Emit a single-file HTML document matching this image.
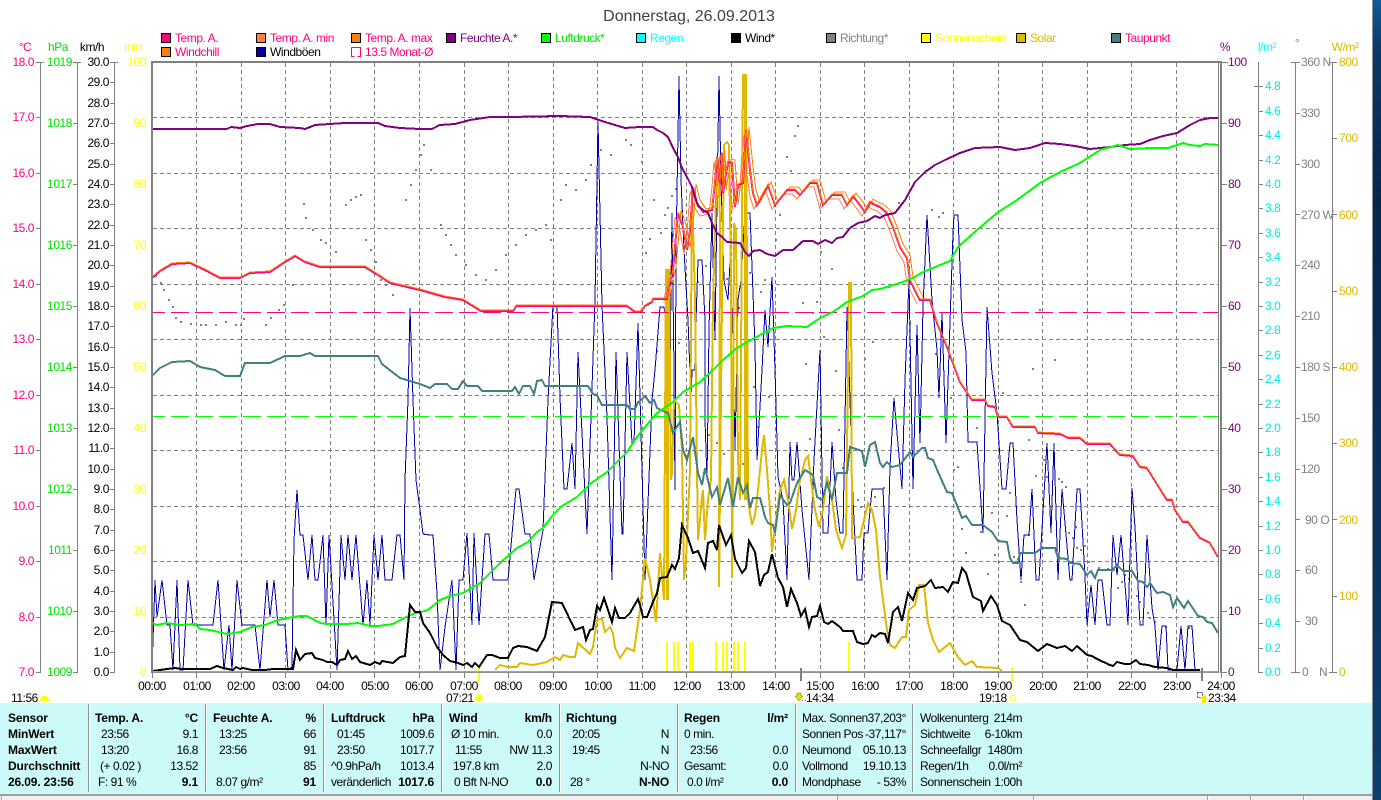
<!DOCTYPE html>
<html lang="de">
<head>
<meta charset="utf-8">
<title>Donnerstag, 26.09.2013</title>
<style>
html,body{margin:0;padding:0;background:#fff;width:1381px;height:800px;overflow:hidden}
svg{position:absolute;left:0;top:0;display:block}
text{font-family:"Liberation Sans",sans-serif;font-size:12px;letter-spacing:-.45px}
.l{fill:none;stroke-linejoin:miter;shape-rendering:crispEdges}
.e{text-anchor:end}
.m{text-anchor:middle}
.b{font-weight:bold;font-size:12px;letter-spacing:-.15px}
</style>
</head>
<body>
<svg width="1381" height="800" viewBox="0 0 1381 800" xmlns="http://www.w3.org/2000/svg">
<defs>
<linearGradient id="desk" x1="0" y1="0" x2="0" y2="1">
<stop offset="0" stop-color="#0f5c9c"/><stop offset=".06" stop-color="#0b3a68"/><stop offset=".25" stop-color="#06274c"/><stop offset=".7" stop-color="#0a3460"/><stop offset="1" stop-color="#0d3f70"/>
</linearGradient>
<polyline id="tp" points="152,278 160,271 172,264 190,263 205,270 220,278 240,278 250,273 270,272 285,262 295,256 305,262 320,267 365,267 378,275 390,283 420,290 445,297 463,300 481,311 513,311 516,306 627,306 635,312 640,312 645,306 652,302 653,299 667,299 668,290 673,270 678,213 683,227 687,250 690,230 693,187 697,203 703,212 712,210 715,183 717,157 720,183 722,153 723,193 728,162 732,163 735,207 738,185 743,183 746,130 750,170 753,193 757,205 768,185 775,205 787,190 795,190 800,195 810,183 817,183 823,205 832,195 842,195 847,205 853,196 860,205 865,212 870,202 875,205 880,207 887,213 893,227 900,247 907,258 910,280 920,300 930,300 937,323 947,347 960,382 972,400 985,400 988,406 995,407 998,417 1007,417 1013,427 1035,427 1038,433 1060,434 1068,438 1080,438 1087,444 1110,444 1120,455 1133,456 1140,467 1147,468 1167,500 1172,500 1175,510 1183,522 1188,522 1200,538 1210,543 1218,557"/>
<polyline id="tpm" points="667,299 668,290 673,270 678,213 683,227 687,250 690,230 693,187 697,203 703,212 712,210 715,183 717,157 720,183 722,153 723,193 728,162 732,163 735,207 738,185 743,183 746,130 750,170 753,193 757,205 768,185 775,205 787,190 795,190 800,195 810,183 817,183 823,205 832,195 842,195 847,205 853,196 860,205 865,212 870,202 875,205 880,207 887,213 893,227 900,247 907,258 910,280 920,300"/>
</defs>

<rect x="1373" y="0" width="8" height="800" fill="url(#desk)"/>
<rect x="1372" y="0" width="1" height="800" fill="#8a8f96"/>

<text x="689" y="21" class="m" style="font-size:16px;letter-spacing:0" fill="#404040">Donnerstag, 26.09.2013</text>

<!-- Legend -->
<g stroke="#000" stroke-width="1" shape-rendering="crispEdges">
<rect x="161.5" y="33.5" width="9" height="9" fill="#ff0080"/>
<rect x="256.5" y="33.5" width="9" height="9" fill="#ff8040"/>
<rect x="351.5" y="33.5" width="9" height="9" fill="#ff8000"/>
<rect x="446.5" y="33.5" width="9" height="9" fill="#800080"/>
<rect x="541.5" y="33.5" width="9" height="9" fill="#00ff00"/>
<rect x="636.5" y="33.5" width="9" height="9" fill="#00ffff"/>
<rect x="731.5" y="33.5" width="9" height="9" fill="#000"/>
<rect x="826.5" y="33.5" width="9" height="9" fill="#808080"/>
<rect x="921.5" y="33.5" width="9" height="9" fill="#ffff00"/>
<rect x="1016.5" y="33.5" width="9" height="9" fill="#e0b800"/>
<rect x="1111.5" y="33.5" width="9" height="9" fill="#408080"/>
<rect x="161.5" y="47.5" width="9" height="9" fill="#ff8000"/>
<rect x="256.5" y="47.5" width="9" height="9" fill="#0000a0"/>
</g>
<path d="M351.5 47.5h9v9h-3M351.5 47.5v9h3" class="l" stroke="#ff0080"/>
<g>
<text x="175" y="42" fill="#ff0080">Temp. A.</text>
<text x="270" y="42" fill="#ff0080">Temp. A. min</text>
<text x="365" y="42" fill="#ff0080">Temp. A. max</text>
<text x="460" y="42" fill="#800080">Feuchte A.*</text>
<text x="555" y="42" fill="#00e000">Luftdruck*</text>
<text x="650" y="42" fill="#00ffff">Regen</text>
<text x="745" y="42" fill="#000">Wind*</text>
<text x="840" y="42" fill="#808080">Richtung*</text>
<text x="935" y="42" fill="#ffff00">Sonnenschein</text>
<text x="1030" y="42" fill="#e0b800">Solar</text>
<text x="1125" y="42" fill="#ff0080">Taupunkt</text>
<text x="175" y="56" fill="#ff0080">Windchill</text>
<text x="270" y="56" fill="#000">Windböen</text>
<text x="365" y="56" fill="#ff0080">13.5 Monat-Ø</text>
</g>

<!-- Axis headers -->
<text x="25" y="51" class="m" fill="#ff0080">°C</text>
<text x="58" y="51" class="m" fill="#00e000">hPa</text>
<text x="92" y="51" class="m" fill="#000">km/h</text>
<text x="133" y="51" class="m" fill="#ffff00">min</text>
<text x="1225" y="51" class="m" fill="#800080">%</text>
<text x="1267" y="51" class="m" fill="#00ffff">l/m²</text>
<text x="1297" y="47" class="m" fill="#808080">°</text>
<text x="1345" y="51" class="m" fill="#e0b800">W/m²</text>

<!-- Left scale axes -->
<path class="l" stroke="#808080" d="M40.5 62V672M77.5 62V672M114.5 62V672M1258.5 62V672M1295.5 62V672M1332.5 62V672
M36 62.5h8M36 117.5h5M36 173.5h5M36 228.5h5M36 284.5h5M36 339.5h5M36 395.5h5M36 450.5h5M36 506.5h5M36 561.5h5M36 617.5h5M36 672.5h5
M73 62.5h8M73 123.5h5M73 184.5h5M73 245.5h5M73 306.5h5M73 367.5h5M73 428.5h5M73 489.5h5M73 550.5h5M73 611.5h5M73 672.5h5
M110 62.5h8M110 82.5h5M110 103.5h5M110 123.5h5M110 143.5h5M110 164.5h5M110 184.5h5M110 204.5h5M110 225.5h5M110 245.5h5M110 265.5h5M110 286.5h5M110 306.5h5M110 326.5h5M110 347.5h5M110 367.5h5M110 387.5h5M110 408.5h5M110 428.5h5M110 448.5h5M110 469.5h5M110 489.5h5M110 509.5h5M110 530.5h5M110 550.5h5M110 570.5h5M110 591.5h5M110 611.5h5M110 631.5h5M110 652.5h5M110 672.5h5
M1222 62.5h6M1222 123.5h5M1222 184.5h5M1222 245.5h5M1222 306.5h5M1222 367.5h5M1222 428.5h5M1222 489.5h5M1222 550.5h5M1222 611.5h5M1222 672.5h5
M1254 86.5h9M1258 111.5h5M1258 135.5h5M1258 160.5h5M1258 184.5h5M1258 208.5h5M1258 233.5h5M1258 257.5h5M1258 282.5h5M1258 306.5h5M1258 330.5h5M1258 355.5h5M1258 379.5h5M1258 404.5h5M1258 428.5h5M1258 452.5h5M1258 477.5h5M1258 501.5h5M1258 526.5h5M1258 550.5h5M1258 574.5h5M1258 599.5h5M1258 623.5h5M1258 648.5h5M1258 672.5h5
M1291 62.5h9M1295 113.5h5M1295 164.5h5M1295 214.5h5M1295 265.5h5M1295 316.5h5M1295 367.5h5M1295 418.5h5M1295 469.5h5M1295 519.5h5M1295 570.5h5M1295 621.5h5M1291 672.5h9
M1329 62.5h8M1332 138.5h5M1332 214.5h5M1332 291.5h5M1332 367.5h5M1332 443.5h5M1332 519.5h5M1332 596.5h5M1329 672.5h8"/>

<g fill="#ff0080">
<text x="34" y="66" class="e">18.0</text><text x="34" y="121" class="e">17.0</text><text x="34" y="177" class="e">16.0</text><text x="34" y="232" class="e">15.0</text><text x="34" y="288" class="e">14.0</text><text x="34" y="343" class="e">13.0</text><text x="34" y="399" class="e">12.0</text><text x="34" y="454" class="e">11.0</text><text x="34" y="510" class="e">10.0</text><text x="34" y="565" class="e">9.0</text><text x="34" y="621" class="e">8.0</text><text x="34" y="676" class="e">7.0</text>
</g>
<g fill="#00e000">
<text x="72" y="66" class="e">1019</text><text x="72" y="127" class="e">1018</text><text x="72" y="188" class="e">1017</text><text x="72" y="249" class="e">1016</text><text x="72" y="310" class="e">1015</text><text x="72" y="371" class="e">1014</text><text x="72" y="432" class="e">1013</text><text x="72" y="493" class="e">1012</text><text x="72" y="554" class="e">1011</text><text x="72" y="615" class="e">1010</text><text x="72" y="676" class="e">1009</text>
</g>
<g fill="#000">
<text x="109" y="66" class="e">30.0</text><text x="109" y="86" class="e">29.0</text><text x="109" y="107" class="e">28.0</text><text x="109" y="127" class="e">27.0</text><text x="109" y="147" class="e">26.0</text><text x="109" y="168" class="e">25.0</text><text x="109" y="188" class="e">24.0</text><text x="109" y="208" class="e">23.0</text><text x="109" y="229" class="e">22.0</text><text x="109" y="249" class="e">21.0</text><text x="109" y="269" class="e">20.0</text><text x="109" y="290" class="e">19.0</text><text x="109" y="310" class="e">18.0</text><text x="109" y="330" class="e">17.0</text><text x="109" y="351" class="e">16.0</text><text x="109" y="371" class="e">15.0</text><text x="109" y="391" class="e">14.0</text><text x="109" y="412" class="e">13.0</text><text x="109" y="432" class="e">12.0</text><text x="109" y="452" class="e">11.0</text><text x="109" y="473" class="e">10.0</text><text x="109" y="493" class="e">9.0</text><text x="109" y="513" class="e">8.0</text><text x="109" y="534" class="e">7.0</text><text x="109" y="554" class="e">6.0</text><text x="109" y="574" class="e">5.0</text><text x="109" y="595" class="e">4.0</text><text x="109" y="615" class="e">3.0</text><text x="109" y="635" class="e">2.0</text><text x="109" y="656" class="e">1.0</text><text x="109" y="676" class="e">0.0</text>
</g>
<g fill="#ffff00">
<text x="146" y="66" class="e">100</text><text x="146" y="127" class="e">90</text><text x="146" y="188" class="e">80</text><text x="146" y="249" class="e">70</text><text x="146" y="310" class="e">60</text><text x="146" y="371" class="e">50</text><text x="146" y="432" class="e">40</text><text x="146" y="493" class="e">30</text><text x="146" y="554" class="e">20</text><text x="146" y="615" class="e">10</text><text x="146" y="676" class="e">0</text>
</g>

<!-- Right scales -->
<g fill="#800080">
<text x="1228" y="66">100</text><text x="1228" y="127">90</text><text x="1228" y="188">80</text><text x="1228" y="249">70</text><text x="1228" y="310">60</text><text x="1228" y="371">50</text><text x="1228" y="432">40</text><text x="1228" y="493">30</text><text x="1228" y="554">20</text><text x="1228" y="615">10</text><text x="1228" y="676">0</text>
</g>
<g fill="#00e8e8">
<text x="1265" y="90">4.8</text><text x="1265" y="115">4.6</text><text x="1265" y="139">4.4</text><text x="1265" y="164">4.2</text><text x="1265" y="188">4.0</text><text x="1265" y="212">3.8</text><text x="1265" y="237">3.6</text><text x="1265" y="261">3.4</text><text x="1265" y="286">3.2</text><text x="1265" y="310">3.0</text><text x="1265" y="334">2.8</text><text x="1265" y="359">2.6</text><text x="1265" y="383">2.4</text><text x="1265" y="408">2.2</text><text x="1265" y="432">2.0</text><text x="1265" y="456">1.8</text><text x="1265" y="481">1.6</text><text x="1265" y="505">1.4</text><text x="1265" y="530">1.2</text><text x="1265" y="554">1.0</text><text x="1265" y="578">0.8</text><text x="1265" y="603">0.6</text><text x="1265" y="627">0.4</text><text x="1265" y="652">0.2</text><text x="1265" y="676">0.0</text>
</g>
<g fill="#808080">
<text x="1301" y="66">360 N</text><text x="1301" y="117">330</text><text x="1301" y="168">300</text><text x="1301" y="219">270 W</text><text x="1301" y="269">240</text><text x="1301" y="320">210</text><text x="1301" y="371">180 S</text><text x="1301" y="422">150</text><text x="1301" y="473">120</text><text x="1305" y="524">90 O</text><text x="1305" y="574">60</text><text x="1305" y="625">30</text><text x="1302" y="676">0</text><text x="1319" y="676">N</text>
</g>
<g fill="#e0b800">
<text x="1339" y="66">800</text><text x="1339" y="142">700</text><text x="1339" y="219">600</text><text x="1339" y="295">500</text><text x="1339" y="371">400</text><text x="1339" y="447">300</text><text x="1339" y="524">200</text><text x="1339" y="600">100</text><text x="1339" y="676">0</text>
</g>

<!-- Grid -->
<path class="l" stroke="#808080" stroke-dasharray="4 3" d="M153 117.5H1218M153 173.5H1218M153 228.5H1218M153 284.5H1218M153 339.5H1218M153 395.5H1218M153 450.5H1218M153 506.5H1218M153 561.5H1218M153 617.5H1218
M196.5 63V671M241.5 63V671M285.5 63V671M330.5 63V671M374.5 63V671M419.5 63V671M464.5 63V671M508.5 63V671M553.5 63V671M597.5 63V671M642.5 63V671M686.5 63V671M731.5 63V671M775.5 63V671M820.5 63V671M864.5 63V671M909.5 63V671M953.5 63V671M998.5 63V671M1042.5 63V671M1087.5 63V671M1131.5 63V671M1176.5 63V671"/>

<!-- Gray direction dots -->
<path class="l" stroke="#808080" stroke-width="2" d="M155 276h2M160 283h2M163 290h2M168 300h2M172 307h2M175 318h2M180 322h2M190 324h2M200 325h2M205 325h2M215 325h2M225 322h2M235 325h2M240 325h2M243 319h2M265 325h2M270 318h2M278 310h2M283 305h2M292 285h2M303 204h2M305 218h2M312 230h2M320 240h2M325 243h2M335 252h2M345 205h2M350 200h2M355 197h2M360 195h2M365 240h2M370 250h2M375 262h2M380 280h2M385 285h2M392 295h2M405 200h2M410 185h2M415 170h2M420 155h2M423 145h2M430 170h2M440 225h2M445 235h2M450 245h2M455 255h2M465 265h2M475 275h2M485 280h2M495 270h2M505 255h2M515 245h2M525 235h2M535 230h2M545 225h2M550 240h2M560 200h2M565 185h2M575 190h2M585 180h2M590 165h2M600 150h2M610 155h2M625 140h2M630 145h2M641 162h2M645 253h2M649 239h2M653 200h2M656 351h2M660 233h2M664 215h2M667 208h2M671 196h2M675 189h2M678 343h2M690 376h2M693 268h2M697 282h2M705 266h2M708 435h2M712 280h2M716 443h2M719 269h2M723 454h2M726 279h2M731 317h2M733 420h2M738 308h2M742 464h2M745 278h2M749 273h2M753 387h2M757 427h2M760 292h2M764 280h2M768 397h2M775 240h2M779 215h2M783 194h2M786 157h2M790 171h2M794 136h2M797 126h2M802 303h2M805 364h2M809 439h2M812 313h2M816 302h2M820 252h2M823 337h2M831 269h2M835 371h2M838 430h2M842 468h2M857 500h2M860 507h2M864 359h2M872 342h2M874 497h2M883 488h2M888 287h2M898 203h2M909 323h2M923 313h2M931 210h2M935 354h2M938 217h2M942 213h2M950 398h2M953 470h2M957 467h2M961 529h2M965 553h2M976 428h2M980 532h2M987 574h2M991 513h2M994 555h2M998 562h2M1002 393h2M1006 516h2M1009 493h2M1013 557h2M1017 559h2M1020 582h2M1024 605h2M1028 440h2M1028 535h2M1032 369h2M1035 476h2M1039 310h2M1043 460h2M1046 477h2M1050 517h2M1054 360h2M1058 479h2M1061 482h2M1065 487h2M1068 533h2M1072 538h2M1075 527h2M1076 548h2M1080 550h2M1084 546h2M1088 562h2M1098 568h2M1107 569h2M1113 570h2M1117 588h2M1121 582h2M1124 575h2M1128 579h2M1136 596h2M1139 602h2M1147 613h2M1149 618h2M1154 622h2M1165 627h2M1188 628h2"/>

<!-- Wind gusts (blue) -->
<polyline class="l" stroke="#0000a8" points="152,670 155,580 157,617 162,580 167,625 170,625 173,670 177,580 180,670 183,670 188,580 193,625 213,625 218,580 224,670 229,625 232,670 237,580 242,625 255,625 260,670 267,580 270,617 274,580 278,625 285,625 288,670 292,667 294,540 297,490 300,535 303,535 308,580 312,535 315,580 318,580 323,535 326,625 329,535 337,670 341,535 345,580 348,535 352,580 356,535 363,625 367,580 370,625 374,535 378,580 382,535 385,580 392,580 397,535 400,535 404,580 405,480 408,400 410,308 413,400 416,480 420,510 423,534 430,535 433,535 437,593 440,670 445,627 452,580 456,670 459,580 463,580 467,533 472,625 474,533 479,625 485,534 489,534 493,580 508,580 516,489 519,489 525,534 530,534 534,580 543,530 548,400 553,305 557,305 560,397 564,489 567,489 572,443 575,489 578,352 587,534 595,300 598,122 602,305 607,417 612,580 616,352 622,534 623,534 627,352 632,443 634,443 638,323 645,580 652,400 655,370 660,307 664,307 668,340 670,370 672,213 674,370 675,490 676,250 679,76 681,180 684,250 688,320 691,400 692,370 695,370 696,320 698,260 702,260 705,320 705,420 707,480 709,330 712,213 714,300 715,340 717,200 719,76 721,180 724,280 728,300 730,263 733,340 735,450 738,300 741,280 745,213 750,213 755,347 757,460 762,370 765,310 768,347 772,277 775,370 778,477 783,500 787,580 790,442 792,480 794,480 797,442 802,510 806,550 809,580 814,460 820,350 823,533 828,533 832,442 836,500 840,533 843,533 847,307 850,400 853,500 857,580 862,580 864,533 868,533 872,489 883,489 887,580 890,467 894,398 897,433 902,489 905,380 909,280 913,489 917,325 920,443 923,307 927,215 932,300 937,350 939,398 942,313 946,443 953,233 954,215 958,215 962,320 966,352 968,442 977,442 983,533 987,307 992,373 997,413 1002,489 1006,489 1010,443 1013,443 1017,520 1021,580 1024,535 1029,535 1032,489 1036,580 1039,580 1047,443 1051,533 1054,443 1058,580 1062,489 1070,580 1072,580 1077,489 1080,489 1085,577 1087,625 1091,585 1095,625 1098,580 1102,580 1107,625 1110,625 1113,535 1117,575 1121,535 1127,610 1128,625 1132,488 1135,527 1140,625 1143,625 1147,535 1152,608 1155,626 1158,670 1162,626 1166,626 1168,670 1177,670 1181,626 1185,670 1188,626 1192,626 1195,670 1200,670"/>

<!-- Solar (gold) -->
<polyline class="l" stroke="#e0b800" stroke-width="2" points="495,670 500,665 508,667 517,667 520,663 533,665 542,663 547,662 555,657 560,660 563,655 570,657 575,657 578,643 590,654 593,647 597,620 602,619 605,632 610,627 613,633 615,648 620,658 627,648 634,651 640,610 645,558 650,580 656,622 660,553 662,575 664,600 666,270 669,270 671,480 672,473 674,400 679,405 682,450 684,580 686,560 690,470 692,187 695,300 697,470 698,540 700,520 702,497 703,490 705,540 708,500 711,480 713,300 716,200 718,160 720,220 719,587 722,300 724,145 727,142 729,145 731,280 732,578 733,480 734,223 736,230 738,460 740,500 743,75 746,75 748,500 752,525 755,515 758,490 762,450 764,435 767,470 770,510 772,552 776,520 780,490 784,480 788,500 792,529 796,510 800,480 805,460 808,456 811,480 815,510 819,527 823,510 827,476 832,500 836,530 842,548 846,535 849,283 851,283 852,538 860,537 864,520 868,503 872,510 876,530 880,577 887,630 890,645 895,648 902,637 906,637 909,610 915,605 919,585 924,585 928,623 933,640 939,652 950,643 958,657 965,665 972,661 977,667 998,668 1002,671"/>
<path class="l" stroke="#e0b800" stroke-width="3" d="M667.5 270V600M745.5 74V500"/>

<!-- Sunshine bars -->
<path class="l" stroke="#ffff00" stroke-width="2" d="M667 642V671M674 642V671M678 642V671M690 642V671M693 642V671M716 642V671M723 642V671M727 642V671M734 642V671M738 642V671M745 642V671M849 642V671M479 667V681M1012 668V681"/>

<!-- Dew point -->
<polyline class="l" stroke="#408080" stroke-width="2" points="152,376 160,368 172,362 190,361 200,367 215,370 225,376 240,376 245,363 270,363 285,356 300,356 310,353 315,356 378,356 382,364 400,378 420,384 430,388 435,384 447,384 452,389 458,389 463,381 467,386 478,386 482,391 512,391 515,387 519,394 523,386 530,386 534,394 537,381 542,380 545,386 588,386 593,394 597,395 602,405 627,405 630,409 635,409 638,402 640,401 645,396 650,403 654,400 657,408 665,412 668,413 673,433 680,422 683,450 687,460 693,437 698,473 702,485 705,468 712,497 717,487 720,505 728,478 733,507 738,477 743,493 747,485 750,508 753,498 760,498 765,517 768,523 773,525 775,533 780,495 787,505 790,503 797,483 805,470 813,475 817,497 822,500 827,483 832,500 837,473 847,473 850,447 862,451 865,467 870,445 875,442 880,463 883,467 887,462 892,467 900,465 910,452 913,457 922,448 925,448 928,458 933,460 938,472 947,492 952,493 962,518 966,516 972,525 983,525 992,532 998,541 1007,542 1010,558 1013,563 1018,563 1020,553 1035,553 1042,548 1055,548 1058,558 1067,559 1070,563 1080,564 1087,575 1091,571 1095,578 1098,570 1112,570 1117,565 1123,571 1132,571 1138,581 1143,582 1147,587 1150,583 1157,593 1163,592 1170,595 1173,607 1177,598 1184,608 1188,601 1198,616 1203,617 1207,622 1212,623 1218,633"/>

<!-- Monthly averages -->
<line x1="153" x2="1218" y1="312.5" y2="312.5" class="l" stroke="#ff0080" stroke-dasharray="18 6" stroke-dashoffset="6"/>
<line x1="153" x2="1218" y1="416.5" y2="416.5" class="l" stroke="#00ff00" stroke-dasharray="18 6" stroke-dashoffset="6"/>

<!-- Temperature -->
<use href="#tpm" class="l" stroke="#ff8040" transform="translate(-3 4)"/>
<use href="#tpm" class="l" stroke="#ff8000" transform="translate(3 -3)"/>
<use href="#tp" class="l" stroke="#ff0080" stroke-width="2"/>
<use href="#tp" class="l" stroke="#ff8000" transform="translate(0 -1)"/>

<!-- Humidity -->
<polyline class="l" stroke="#800080" stroke-width="2" points="152,129 227,129 231,127 240,128 247,126 258,124 270,124 280,127 300,128 305,129 315,125 330,124 345,123 378,123 385,126 400,128 420,129 432,129 440,125 455,124 470,120 490,117 510,117 560,116 590,117 605,122 625,128 640,127 653,127 657,130 663,133 668,137 673,148 678,157 682,168 687,177 692,187 695,197 698,206 703,210 708,213 712,223 717,233 722,237 727,242 740,243 745,252 749,256 753,251 760,250 767,254 775,256 783,250 793,250 803,241 813,241 818,244 825,240 832,243 837,238 843,237 850,228 858,223 867,221 875,216 880,218 885,215 895,213 905,200 915,182 925,172 935,165 945,160 960,153 975,148 1000,147 1015,150 1030,148 1045,143 1060,144 1075,146 1090,149 1110,147 1125,145 1140,144 1150,140 1163,136 1177,133 1190,125 1200,120 1210,118 1219,118"/>

<!-- Pressure -->
<polyline class="l" stroke="#00ff00" stroke-width="2" points="152,623 157,625 167,623 180,625 195,624 200,629 210,630 227,634 240,632 252,627 265,625 278,620 293,617 300,616 307,616 320,623 327,624 347,624 358,623 370,626 378,626 393,624 410,615 428,610 440,600 450,596 463,593 480,583 500,563 517,548 528,542 537,532 543,528 553,515 562,506 577,497 590,484 607,472 627,452 640,433 657,413 673,402 683,392 700,382 713,370 723,360 737,348 747,342 760,335 773,328 787,326 807,327 820,318 833,312 847,302 863,296 872,290 880,289 900,283 913,278 923,272 933,268 940,265 950,261 958,247 977,230 997,213 1017,200 1040,183 1060,172 1080,163 1100,150 1118,145 1130,149 1150,148 1168,148 1183,143 1190,145 1200,146 1205,144 1219,145"/>

<!-- Wind (black) -->
<polyline class="l" stroke="#000" stroke-width="2" points="152,671 160,670 167,669 175,668 182,669 195,669 210,669 217,666 223,668 233,670 236,667 240,669 243,668 252,670 265,670 273,669 288,669 293,669 296,650 300,660 305,654 312,653 315,658 323,660 327,662 332,662 337,665 340,660 345,659 348,651 352,659 356,656 360,662 370,665 375,662 380,664 382,661 393,663 400,657 405,656 410,605 415,612 420,612 423,623 430,633 437,647 443,655 450,661 458,663 463,665 467,663 472,667 475,663 479,667 487,655 492,655 500,658 508,658 513,648 518,646 527,647 537,651 545,637 552,602 562,603 575,630 583,627 586,640 590,630 593,629 597,606 600,610 604,598 612,622 615,608 619,618 625,618 630,613 638,599 640,605 643,617 647,617 653,602 657,593 660,578 667,577 672,565 675,569 679,558 682,525 688,538 693,553 698,551 705,568 708,543 713,541 717,550 719,525 726,545 731,535 735,559 742,573 746,568 749,541 755,552 760,586 764,575 768,572 772,554 778,578 783,587 787,607 791,589 797,603 801,616 805,609 809,627 812,617 817,616 820,606 824,622 828,624 832,621 840,627 843,631 853,631 857,642 863,644 868,643 872,635 875,637 880,633 885,634 888,643 893,612 898,607 902,621 908,593 913,600 917,588 925,586 931,580 935,588 943,587 948,592 953,582 958,583 962,568 966,573 973,597 981,601 983,611 991,596 997,605 1002,621 1010,625 1020,640 1027,642 1038,651 1047,644 1057,648 1065,646 1072,651 1077,646 1087,655 1092,656 1097,659 1110,665 1113,666 1117,662 1125,664 1130,664 1136,660 1140,664 1148,665 1155,667 1167,668 1173,670 1200,670"/>

<!-- Frame -->
<rect x="153" y="671" width="1066" height="1" fill="#20d8e0"/>
<rect x="153" y="672" width="1066" height="1" fill="#909090"/>
<rect x="151" y="61" width="1070" height="2" fill="#808080"/>
<rect x="151" y="61" width="2" height="612" fill="#808080"/>
<rect x="1218" y="61" width="1" height="612" fill="#808080"/>
<rect x="1220" y="61" width="2" height="612" fill="#808080"/>
<path class="l" stroke="#808080" d="M152.5 673V678M196.5 673V678M241.5 673V678M285.5 673V678M330.5 673V678M374.5 673V678M419.5 673V678M464.5 673V678M508.5 673V678M553.5 673V678M597.5 673V678M642.5 673V678M686.5 673V678M731.5 673V678M775.5 673V678M820.5 673V678M864.5 673V678M909.5 673V678M953.5 673V678M998.5 673V678M1042.5 673V678M1087.5 673V678M1131.5 673V678M1176.5 673V678M1221.5 673V678"/>
<path class="l" stroke="#808080" stroke-width="2" d="M801 668V681M1202 668V681"/>

<!-- Hours -->
<g fill="#000">
<text x="152" y="690" class="m">00:00</text><text x="197" y="690" class="m">01:00</text><text x="241" y="690" class="m">02:00</text><text x="286" y="690" class="m">03:00</text><text x="330" y="690" class="m">04:00</text><text x="375" y="690" class="m">05:00</text><text x="419" y="690" class="m">06:00</text><text x="464" y="690" class="m">07:00</text><text x="508" y="690" class="m">08:00</text><text x="553" y="690" class="m">09:00</text><text x="598" y="690" class="m">10:00</text><text x="642" y="690" class="m">11:00</text><text x="687" y="690" class="m">12:00</text><text x="731" y="690" class="m">13:00</text><text x="776" y="690" class="m">14:00</text><text x="820" y="690" class="m">15:00</text><text x="865" y="690" class="m">16:00</text><text x="909" y="690" class="m">17:00</text><text x="954" y="690" class="m">18:00</text><text x="998" y="690" class="m">19:00</text><text x="1043" y="690" class="m">20:00</text><text x="1087" y="690" class="m">21:00</text><text x="1132" y="690" class="m">22:00</text><text x="1177" y="690" class="m">23:00</text><text x="1221" y="690" class="m">24:00</text>
<text x="11" y="702">11:56</text>
<text x="446" y="702">07:21</text>
<text x="806" y="702">14:34</text>
<text x="979" y="702">19:18</text>
<text x="1208" y="702">23:34</text>
</g>

<!-- Small icons -->
<path d="M40 701a4.5 5.5 0 0 1 9 0z" fill="#ffff00"/>
<circle cx="479" cy="698" r="4.5" fill="#fff28a"/><circle cx="479" cy="698" r="3" fill="#ffff00"/>
<path d="M797 693h4v3h2l-4 5-4-5h2z" fill="#e8e000" stroke="#707000" stroke-width=".5"/>
<path class="l" stroke="#5060c0" stroke-dasharray="1 2" d="M802 700.5h6"/>
<rect x="1010.5" y="695.5" width="4" height="5" fill="none" stroke="#ffff60" class="l"/>
<path class="l" stroke="#4050b0" stroke-dasharray="2 1" d="M1197.5 692.5h5v5h-5z"/>
<path d="M1204 694l4 5h-2v4h-4v-4h-2z" fill="#ffe800"/>

<!-- Info panel -->
<rect x="0" y="703" width="1372" height="91" fill="#cbfaf8"/>
<path class="l" stroke="#909090" d="M88.5 704V792M205.5 704V792M323.5 704V792M441.5 704V792M559.5 704V792M677.5 704V792M795.5 704V792M912.5 704V792"/>
<path class="l" stroke="#ffffff" d="M89.5 704V792M206.5 704V792M324.5 704V792M442.5 704V792M560.5 704V792M678.5 704V792M796.5 704V792M913.5 704V792"/>

<g fill="#000">
<text x="8" y="722" class="b">Sensor</text><text x="8" y="738" class="b">MinWert</text><text x="8" y="754" class="b">MaxWert</text><text x="8" y="770" class="b">Durchschnitt</text><text x="8" y="786" class="b">26.09. 23:56</text>

<text x="95" y="722" class="b">Temp. A.</text><text x="198" y="722" class="b e">°C</text>
<text x="101" y="738">23:56</text><text x="198" y="738" class="e">9.1</text>
<text x="101" y="754">13:20</text><text x="198" y="754" class="e">16.8</text>
<text x="100" y="770">(+ 0.02 )</text><text x="198" y="770" class="e">13.52</text>
<text x="98" y="786">F: 91 %</text><text x="198" y="786" class="b e">9.1</text>

<text x="213" y="722" class="b">Feuchte A.</text><text x="316" y="722" class="b e">%</text>
<text x="219" y="738">13:25</text><text x="316" y="738" class="e">66</text>
<text x="219" y="754">23:56</text><text x="316" y="754" class="e">91</text>
<text x="316" y="770" class="e">85</text>
<text x="216" y="786">8.07 g/m²</text><text x="316" y="786" class="b e">91</text>

<text x="331" y="722" class="b">Luftdruck</text><text x="434" y="722" class="b e">hPa</text>
<text x="337" y="738">01:45</text><text x="434" y="738" class="e">1009.6</text>
<text x="337" y="754">23:50</text><text x="434" y="754" class="e">1017.7</text>
<text x="331" y="770">^0.9hPa/h</text><text x="434" y="770" class="e">1013.4</text>
<text x="331" y="786">veränderlich</text><text x="434" y="786" class="b e">1017.6</text>

<text x="449" y="722" class="b">Wind</text><text x="552" y="722" class="b e">km/h</text>
<text x="451" y="738">Ø 10 min.</text><text x="552" y="738" class="e">0.0</text>
<text x="455" y="754">11:55</text><text x="552" y="754" class="e">NW 11.3</text>
<text x="453" y="770">197.8 km</text><text x="552" y="770" class="e">2.0</text>
<text x="454" y="786">0 Bft N-NO</text><text x="552" y="786" class="b e">0.0</text>

<text x="566" y="722" class="b">Richtung</text>
<text x="572" y="738">20:05</text><text x="669" y="738" class="e">N</text>
<text x="572" y="754">19:45</text><text x="669" y="754" class="e">N</text>
<text x="669" y="770" class="e">N-NO</text>
<text x="570" y="786">28 °</text><text x="669" y="786" class="b e">N-NO</text>

<text x="684" y="722" class="b">Regen</text><text x="788" y="722" class="b e">l/m²</text>
<text x="684" y="738">0 min.</text>
<text x="690" y="754">23:56</text><text x="788" y="754" class="e">0.0</text>
<text x="684" y="770">Gesamt:</text><text x="788" y="770" class="e">0.0</text>
<text x="687" y="786">0.0 l/m²</text><text x="788" y="786" class="b e">0.0</text>

<text x="802" y="722">Max. Sonnen</text><text x="906" y="722" class="e">37,203°</text>
<text x="802" y="738">Sonnen Pos</text><text x="906" y="738" class="e">-37,117°</text>
<text x="802" y="754">Neumond</text><text x="906" y="754" class="e">05.10.13</text>
<text x="802" y="770">Vollmond</text><text x="906" y="770" class="e">19.10.13</text>
<text x="802" y="786">Mondphase</text><text x="906" y="786" class="e">- 53%</text>

<text x="920" y="722">Wolkenunterg</text><text x="1022" y="722" class="e">214m</text>
<text x="920" y="738">Sichtweite</text><text x="1022" y="738" class="e">6-10km</text>
<text x="920" y="754">Schneefallgr</text><text x="1022" y="754" class="e">1480m</text>
<text x="920" y="770">Regen/1h</text><text x="1022" y="770" class="e">0.0l/m²</text>
<text x="920" y="786">Sonnenschein</text><text x="1022" y="786" class="e">1:00h</text>
</g>

<!-- Status bar -->
<rect x="0" y="794" width="1372" height="2" fill="#a0a0a0"/>
<rect x="0" y="796" width="1372" height="4" fill="#f0f0f0"/>
<path class="l" stroke="#a0a0a0" d="M1.5 796V800M837.5 796V800M1033.5 796V800M1207.5 796V800M1250.5 796V800M1303.5 796V800"/>
<path class="l" stroke="#ffffff" d="M838.5 796V800M1034.5 796V800M1208.5 796V800M1251.5 796V800M1304.5 796V800"/>
</svg>
</body>
</html>
